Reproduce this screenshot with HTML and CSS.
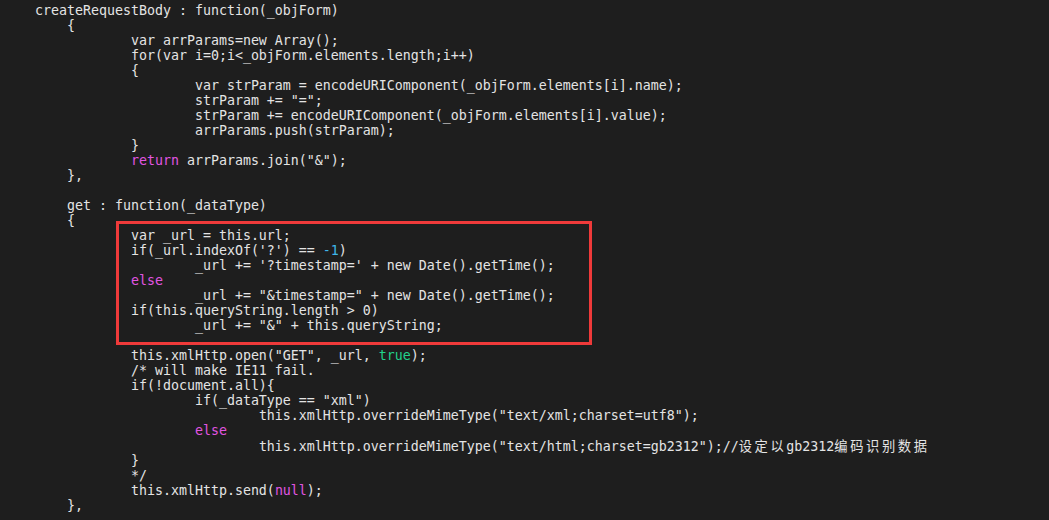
FILE: index.html
```html
<!DOCTYPE html>
<html lang="zh-CN">
<head>
<meta charset="utf-8">
<title>code</title>
<link rel="stylesheet" href="styles.css">
</head>
<body>
<div class="editor">
<div class="code">
<div class="line">    createRequestBody : function(_objForm)</div>
<div class="line">	{</div>
<div class="line">		var arrParams=new Array();</div>
<div class="line">		for(var i=0;i&lt;_objForm.elements.length;i++)</div>
<div class="line">		{</div>
<div class="line">			var strParam = encodeURIComponent(_objForm.elements[i].name);</div>
<div class="line">			strParam += "=";</div>
<div class="line">			strParam += encodeURIComponent(_objForm.elements[i].value);</div>
<div class="line">			arrParams.push(strParam);</div>
<div class="line">		}</div>
<div class="line">		<span class="kw">return</span> arrParams.join("&amp;");</div>
<div class="line">	},</div>
<div class="line"></div>
<div class="line">	get : function(_dataType)</div>
<div class="line">	{</div>
<div class="line">		var _url = this.url;</div>
<div class="line">		if(_url.indexOf('?') == <span class="num">-1</span>)</div>
<div class="line">			_url += '?timestamp=' + new Date().getTime();</div>
<div class="line">		<span class="kw">else</span></div>
<div class="line">			_url += "&amp;timestamp=" + new Date().getTime();</div>
<div class="line">		if(this.queryString.length &gt; 0)</div>
<div class="line">			_url += "&amp;" + this.queryString;</div>
<div class="line"></div>
<div class="line">		this.xmlHttp.open("GET", _url, <span class="bool">true</span>);</div>
<div class="line">		/* will make IE11 fail.</div>
<div class="line">		if(!document.all){</div>
<div class="line">			if(_dataType == "xml")</div>
<div class="line">				this.xmlHttp.overrideMimeType("text/xml;charset=utf8");</div>
<div class="line">			<span class="kw">else</span></div>
<div class="line">				this.xmlHttp.overrideMimeType("text/html;charset=gb2312");//<span class="cjk">设定以</span>gb2312<span class="cjk">编码识别数据</span></div>
<div class="line">		}</div>
<div class="line">		*/</div>
<div class="line">		this.xmlHttp.send(<span class="kw">null</span>);</div>
<div class="line">	},</div>
</div>
<div class="highlight"></div>
</div>
</body>
</html>
```
FILE: styles.css
```css
html, body {
  margin: 0;
  padding: 0;
  background: #1e1e1e;
  width: 1049px;
  height: 520px;
  overflow: hidden;
}

.editor {
  position: relative;
  width: 1049px;
  height: 520px;
  background: #1e1e1e;
}

.code {
  display: flex;
  flex-direction: column;
  padding: 3px 0 0 3px;
  font-family: "DejaVu Sans Mono", "Liberation Mono", "Noto Sans CJK SC", monospace;
  font-size: 13.29px;
  line-height: 15px;
  color: #e4e4e4;
  tab-size: 8;
  -moz-tab-size: 8;
}

.line {
  height: 15px;
  white-space: pre;
}

.kw {
  color: #e155e1;
}

.num {
  color: #3fb6e8;
}

.bool {
  color: #22d18b;
}

.cjk {
  font-family: "Noto Sans CJK SC", sans-serif;
  letter-spacing: 2.6px;
}

.highlight {
  position: absolute;
  left: 116px;
  top: 221px;
  width: 470px;
  height: 118px;
  border: 3px solid #ef3a3a;
}
```
